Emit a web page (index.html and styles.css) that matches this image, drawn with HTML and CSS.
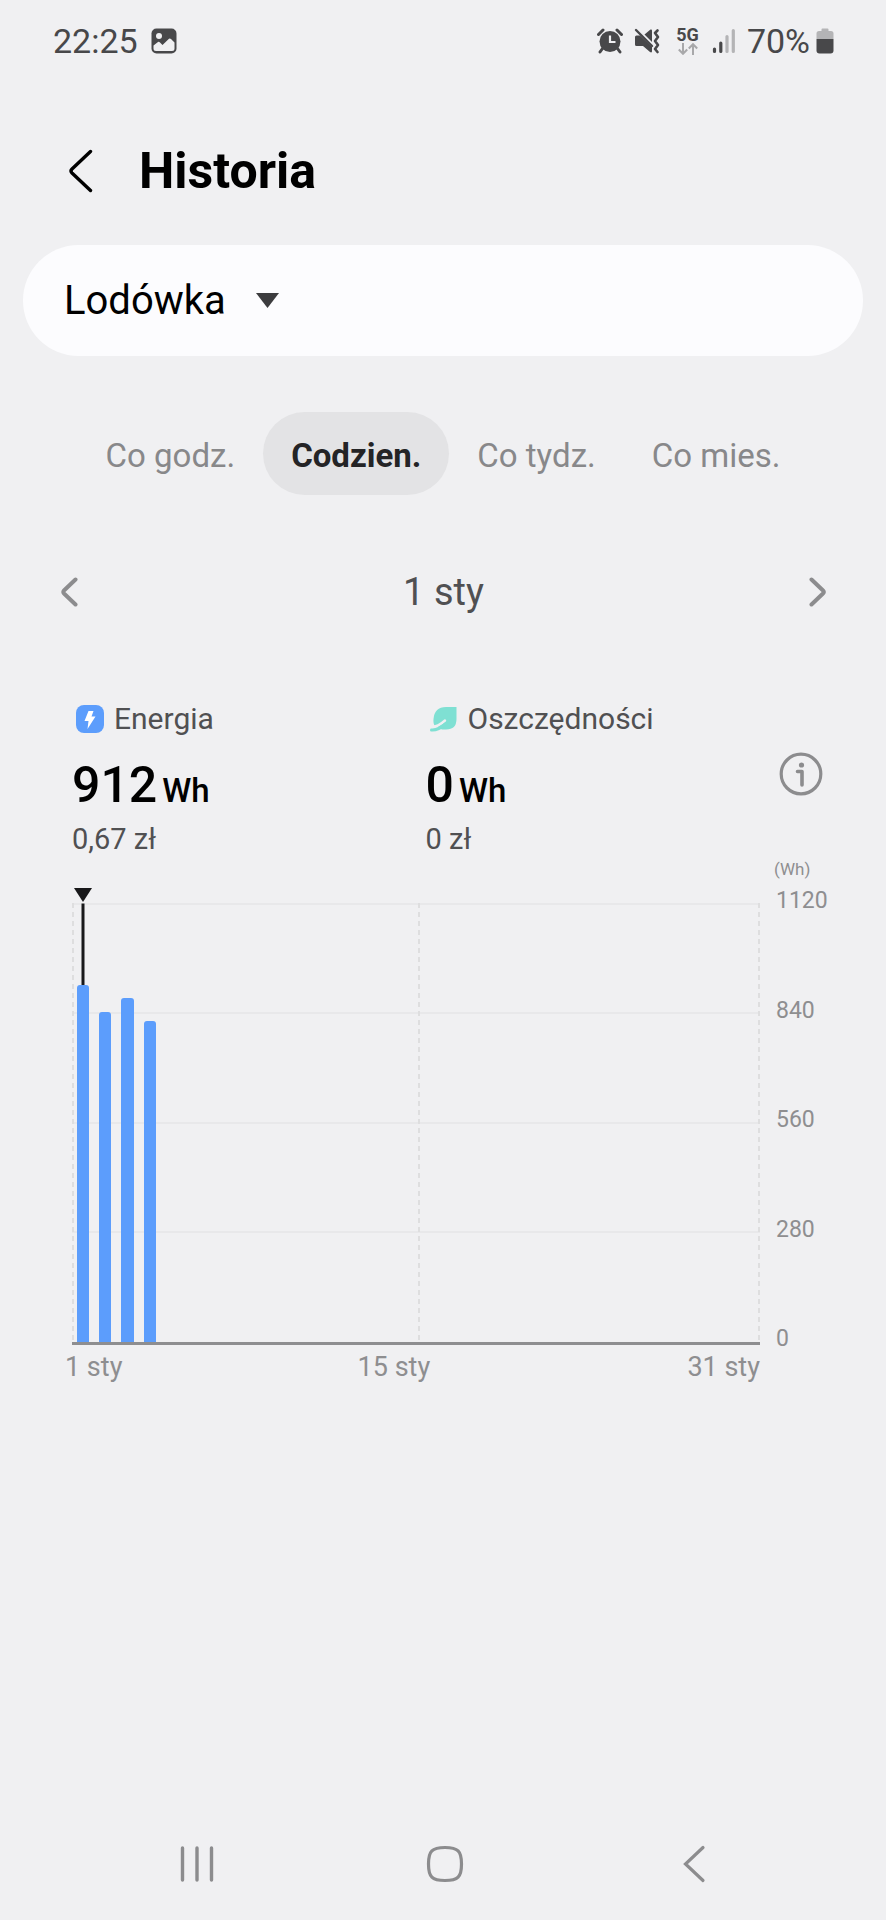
FILE: index.html
```html
<!DOCTYPE html>
<html lang="pl">
<head>
<meta charset="utf-8">
<meta name="viewport" content="width=device-width, initial-scale=1">
<title>Historia</title>
<link rel="stylesheet" href="styles.css">
</head>
<body>
<div class="status">
  <span class="status-text">22:25</span>
  <svg class="status-photo" width="26" height="26" viewBox="0 0 26 26" aria-hidden="true">
    <rect x="0.5" y="0.5" width="25" height="25" rx="5" fill="#48484a"/>
    <circle cx="8" cy="8" r="3" fill="#f0f0f2"/>
    <path d="M2.5 17.5 L7 14 Q8 13.5 9 14.5 L11.5 17 L18 10.8 Q19 10 20 11 L23.500 14.500 V20.500 Q23.500 23 21 23 H5 Q2.500 23 2.500 20.500 Z" fill="#f0f0f2"/>
  </svg>
  <div class="status-icons">
    <svg width="26" height="26" viewBox="0 0 26 26" aria-hidden="true">
      <circle cx="13" cy="13.500" r="10.500" fill="#48484a"/>
      <path d="M1.500 6.500 L6 2 M24.500 6.500 L20 2 M5.500 20.500 L3 24 M20.500 20.500 L23 24" stroke="#48484a" stroke-width="3" stroke-linecap="round"/>
      <path d="M13 7.500 V14 H18.500" fill="none" stroke="#f0f0f2" stroke-width="2.200"/>
    </svg>
    <svg class="status-mute" width="26" height="26" viewBox="0 0 26 26" aria-hidden="true">
      <path d="M1 9 Q1 7.500 2.500 7.500 H6 L18 19 V23.500 Q17.500 25 16 24 L9 18 H2.500 Q1 18 1 16.500 Z" fill="#48484a"/>
      <path d="M10.500 6.500 L16.500 1.500 Q18 1 18 2.500 V14 Z" fill="#48484a"/>
      <path d="M2 2 L18 18" stroke="#48484a" stroke-width="2.400" stroke-linecap="round"/>
      <path d="M23.500 2.500 L21 5 L24 9 L21 13 L24 17 L21 21 L23.500 24" fill="none" stroke="#48484a" stroke-width="2.600" stroke-linejoin="round" stroke-linecap="round"/>
    </svg>
    <span class="status-net">
      <span class="status-5g">5G</span>
      <svg width="20" height="12" viewBox="0 0 20 12" aria-hidden="true">
        <path d="M5 0 V10.500 M0.800 6.500 L5 10.800 L9.200 6.500 M15 12 V1.500 M10.800 5.500 L15 1.200 L19.200 5.500" fill="none" stroke="#a8a8aa" stroke-width="2"/>
      </svg>
    </span>
    <svg class="status-signal" width="24" height="26" viewBox="0 0 24 26" aria-hidden="true">
      <path d="M2.500 21 V23.500 M8.800 15 V23.500" stroke="#48484a" stroke-width="3.200" stroke-linecap="round"/>
      <path d="M15 8.500 V23.500 M21.300 2.500 V23.500" stroke="#b4b4b6" stroke-width="3.200" stroke-linecap="round"/>
    </svg>
    <span class="status-text">70%</span>
    <svg class="status-battery" width="18" height="26" viewBox="0 0 18 26" aria-hidden="true">
      <path d="M5.500 1.500 Q5.500 0.500 6.500 0.500 H11.500 Q12.500 0.500 12.500 1.500 V3 H15 Q17.500 3 17.500 5.500 V11 H0.500 V5.500 Q0.500 3 3 3 H5.500 Z" fill="#b4b4b6"/>
      <path d="M0.500 11 H17.500 V22.500 Q17.500 25.500 14.500 25.500 H3.500 Q0.500 25.500 0.500 22.500 Z" fill="#48484a"/>
    </svg>
  </div>
</div>

<header class="header">
  <button class="icon-button" type="button" aria-label="Wstecz">
    <svg width="24" height="44" viewBox="0 0 24 44" aria-hidden="true">
      <path d="M21 2.500 L2.500 20 Q0.500 22 2.500 24 L21 41.500" transform="translate(0.5 0)" fill="none" stroke="#000" stroke-width="3.400" stroke-linecap="round"/>
    </svg>
  </button>
  <h1 class="title">Historia</h1>
</header>

<main class="main">
  <div class="device">
    <select class="device-select" aria-label="Urządzenie">
      <option>Lodówka</option>
    </select>
    <svg width="23" height="15" viewBox="0 0 23 15" aria-hidden="true"><path d="M0 0 H23 L11.500 15 Z" fill="#3c3c3e"/></svg>
  </div>

  <div class="tabs" role="tablist">
    <button class="tab" type="button" role="tab" aria-selected="false">Co godz.</button>
    <button class="tab tab-active" type="button" role="tab" aria-selected="true">Codzien.</button>
    <button class="tab" type="button" role="tab" aria-selected="false">Co tydz.</button>
    <button class="tab" type="button" role="tab" aria-selected="false">Co mies.</button>
  </div>

  <div class="period">
    <button class="icon-button" type="button" aria-label="Poprzedni">
      <svg width="17" height="30" viewBox="0 0 17 30" aria-hidden="true">
        <path d="M14.500 2.500 L3 13.500 Q1.500 15 3 16.500 L14.500 27.500" fill="none" stroke="#8c8c8e" stroke-width="4" stroke-linecap="round"/>
      </svg>
    </button>
    <span class="period-label">1 sty</span>
    <button class="icon-button" type="button" aria-label="Następny">
      <svg width="17" height="30" viewBox="0 0 17 30" aria-hidden="true">
        <path d="M2.500 2.500 L14 13.500 Q15.500 15 14 16.500 L2.500 27.500" fill="none" stroke="#8c8c8e" stroke-width="4" stroke-linecap="round"/>
      </svg>
    </button>
  </div>

  <section class="summary">
    <div class="metric">
      <div class="metric-name">
        <svg width="34" height="28" viewBox="0 0 34 28" aria-hidden="true">
          <rect x="4" y="0" width="28" height="28" rx="8" fill="#5c9dfc"/>
          <path d="M16.500 6 H21.500 L19.500 11.500 H23.500 L15.500 24 L16.500 16 H12.500 Z" fill="#fff"/>
        </svg>
        <span>Energia</span>
      </div>
      <div class="metric-value">912<span class="metric-unit">Wh</span></div>
      <div class="metric-cost">0,67 zł</div>
    </div>
    <div class="metric">
      <div class="metric-name">
        <svg width="34" height="28" viewBox="0 0 34 28" aria-hidden="true">
          <path d="M30.500 2 V14 Q30.500 24.500 20 24.500 H16 L9 21 Q7 19 7.500 14 Q8.500 2 20 2 Z" fill="#7fe0d3"/>
          <path d="M5 22 Q12 22 19 15.500" fill="none" stroke="#f0f0f2" stroke-width="2.400" stroke-linecap="round"/>
          <path d="M5.500 25 Q12 25.500 19.500 19" fill="none" stroke="#7fe0d3" stroke-width="3" stroke-linecap="round"/>
        </svg>
        <span>Oszczędności</span>
      </div>
      <div class="metric-value">0<span class="metric-unit">Wh</span></div>
      <div class="metric-cost">0 zł</div>
    </div>
    <button class="icon-button info" type="button" aria-label="Informacje">
      <svg width="44" height="44" viewBox="0 0 44 44" aria-hidden="true">
        <circle cx="22" cy="22" r="19.800" fill="none" stroke="#8c8c8e" stroke-width="3.200"/>
        <circle cx="22.500" cy="13" r="2.600" fill="#8c8c8e"/>
        <path d="M18.500 19.500 H23 V33" fill="none" stroke="#8c8c8e" stroke-width="3.600" stroke-linecap="round" stroke-linejoin="round"/>
      </svg>
    </button>
  </section>

  <section class="chart" aria-label="Zużycie energii">
    <div class="chart-unit">(Wh)</div>
    <div class="plot">
      <div class="bar bar-selected" style="height: 81.4%">
        <svg class="marker" width="18" height="97" viewBox="0 0 18 97" aria-hidden="true">
          <path d="M0 0 H18 L9 14 Z" fill="#18181a"/>
          <path d="M9 15.500 V97" stroke="#18181a" stroke-width="3"/>
        </svg>
      </div>
      <div class="bar" style="height: 75.2%"></div>
      <div class="bar" style="height: 78.4%"></div>
      <div class="bar" style="height: 73.2%"></div>
    </div>
    <div class="y-axis"><span>1120</span><span>840</span><span>560</span><span>280</span><span>0</span></div>
    <div class="x-axis"><span>1 sty</span><span class="x-middle">15 sty</span><span>31 sty</span></div>
  </section>
</main>

<nav class="nav">
  <button class="icon-button" type="button" aria-label="Ostatnie">
    <svg width="36" height="38" viewBox="0 0 36 38" aria-hidden="true"><path d="M3.500 3 V35 M18 3 V35 M32.500 3 V35" stroke="#8c8c8e" stroke-width="3.400" stroke-linecap="round"/></svg>
  </button>
  <button class="icon-button" type="button" aria-label="Ekran główny">
    <svg width="38" height="38" viewBox="0 0 38 38" aria-hidden="true"><path d="M19 2.500 C32 2.500 35.500 6 35.500 19 C35.500 32 32 35.500 19 35.500 C6 35.500 2.500 32 2.500 19 C2.500 6 6 2.500 19 2.500 Z" fill="none" stroke="#8c8c8e" stroke-width="3.200"/></svg>
  </button>
  <button class="icon-button" type="button" aria-label="Wstecz">
    <svg width="24" height="38" viewBox="0 0 24 38" aria-hidden="true"><path d="M21 2.500 L3.500 19 L21 35.500" fill="none" stroke="#8c8c8e" stroke-width="3.200" stroke-linecap="round"/></svg>
  </button>
</nav>
</body>
</html>
```

FILE: styles.css
```css
* {
  box-sizing: border-box;
}

body {
  margin: 0;
  min-height: 100vh;
  display: flex;
  flex-direction: column;
  background: #f0f0f2;
  color: #000;
  font-family: Roboto, "Noto Sans", sans-serif;
}

button,
select {
  margin: 0;
  border: 0;
  background: none;
  font: inherit;
  color: inherit;
}

svg {
  display: block;
  flex: none;
}

.icon-button {
  display: flex;
  justify-content: center;
  padding: 0;
}

.status {
  display: flex;
  align-items: center;
  height: 82px;
  padding: 0 52px 0 53px;
  color: #48484a;
}

.status-text {
  font-size: 34px;
  line-height: 40px;
}

.status-photo {
  margin-left: 13px;
}

.status-icons {
  display: flex;
  align-items: center;
  margin-left: auto;
}

.status-mute {
  margin-left: 11px;
}

.status-net {
  display: flex;
  flex-direction: column;
  align-items: center;
  margin-left: 16px;
}

.status-5g {
  font-size: 18px;
  line-height: 16px;
  font-weight: 700;
}

.status-signal {
  margin: 0 11px 0 13px;
}

.status-battery {
  margin-left: 6px;
}

.header {
  display: flex;
  align-items: center;
  gap: 46px;
  height: 163px;
  padding: 14px 69px 0;
}

.title {
  margin: 0;
  font-size: 50px;
  line-height: 60px;
  font-weight: 700;
}

.main {
  flex: 1;
}

.device {
  display: flex;
  align-items: center;
  gap: 30px;
  height: 111px;
  margin: 0 23px;
  padding: 0 41px;
  border-radius: 56px;
  background: #fcfcfe;
}

.device-select {
  appearance: none;
  padding: 0;
  font-size: 40px;
  line-height: 48px;
}

.tabs {
  display: flex;
  justify-content: center;
  margin-top: 56px;
}

.tab {
  height: 83px;
  padding: 4px 28px 0;
  border-radius: 42px;
  color: #88888a;
  font-size: 33px;
  line-height: 40px;
}

.tab-active {
  background: #e3e3e5;
  color: #242426;
  font-weight: 700;
}

.period {
  display: flex;
  align-items: center;
  justify-content: space-between;
  margin-top: 73px;
  padding: 0 60px 0 61px;
}

.period-label {
  color: #505052;
  font-size: 38px;
  line-height: 48px;
}

.summary {
  display: grid;
  grid-template-columns: 1fr 1fr 44px;
  align-items: start;
  margin-top: 83px;
  padding: 0 63px 0 72px;
}

.metric-name {
  display: flex;
  align-items: center;
  gap: 8px;
  color: #505052;
  font-size: 30px;
  line-height: 40px;
}

.metric-value {
  margin-top: 16px;
  font-size: 50px;
  line-height: 60px;
  font-weight: 500;
}

.metric-unit {
  margin-left: 5px;
  font-size: 33px;
}

.metric-cost {
  color: #505052;
  font-size: 29px;
  line-height: 36px;
}

.info {
  margin-top: 53px;
}

.chart {
  display: grid;
  grid-template-columns: 1fr 48px;
  column-gap: 16px;
  padding: 0 62px 0 72px;
  color: #8e8e90;
}

.chart-unit {
  grid-column: 2;
  margin-left: -2px;
  font-size: 17px;
  line-height: 24px;
}

.plot {
  --dash: repeating-linear-gradient(#dededf 0 5px, transparent 5px 9px);
  --rule: linear-gradient(#e8e8ea, #e8e8ea);
  display: grid;
  grid-template-columns: repeat(31, 1fr);
  align-items: end;
  height: 442px;
  margin-top: 22px;
  border-bottom: 3px solid #8e8e90;
  background:
    var(--dash) left / 2px 100% no-repeat,
    var(--dash) 50.5% / 2px 100% no-repeat,
    var(--dash) right / 2px 100% no-repeat,
    var(--rule) 0 0 / 100% 2px no-repeat,
    var(--rule) 0 25% / 100% 2px no-repeat,
    var(--rule) 0 50% / 100% 2px no-repeat,
    var(--rule) 0 75% / 100% 2px no-repeat;
}

.bar {
  margin: 0 5px;
  border-radius: 3px 3px 0 0;
  background: #5c9dfc;
}

.bar-selected {
  position: relative;
}

.marker {
  position: absolute;
  bottom: 100%;
  left: 50%;
  transform: translateX(-50%);
}

.y-axis {
  display: flex;
  flex-direction: column;
  justify-content: space-between;
  margin: 8px 0 -6px;
  font-size: 23px;
  line-height: 24px;
}

.x-axis {
  display: flex;
  justify-content: space-between;
  margin: 2px 0 0 -7px;
  font-size: 27px;
  line-height: 40px;
}

.x-middle {
  margin-right: 22px;
}

.nav {
  display: grid;
  grid-template-columns: repeat(3, 1fr);
  justify-items: center;
  padding: 0 68px 37px 73px;
}
```
